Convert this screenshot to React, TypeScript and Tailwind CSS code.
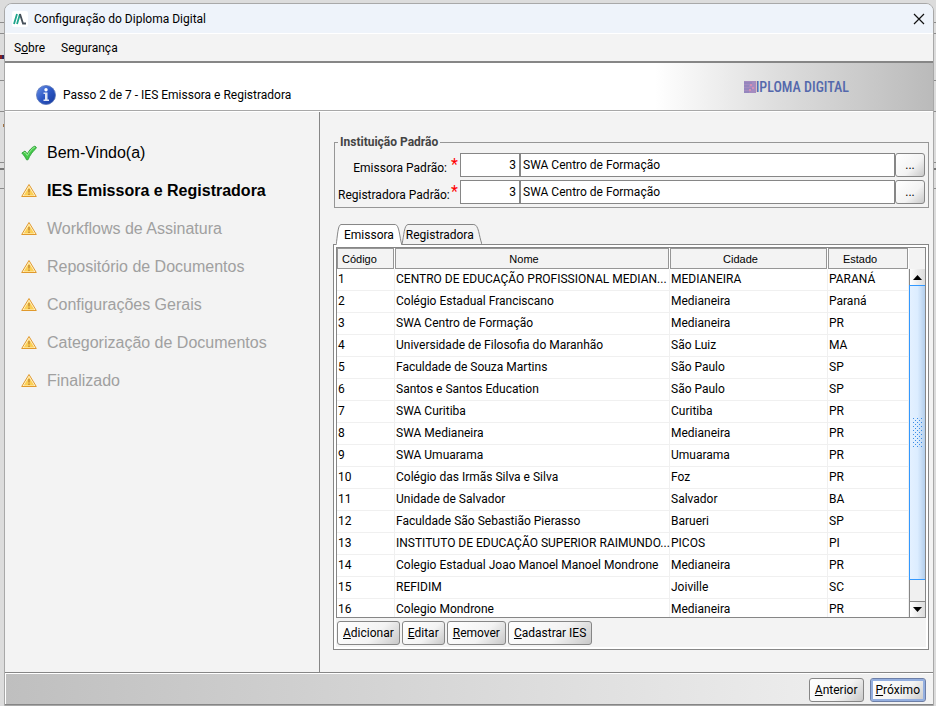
import { useState } from 'react'

const UI = "font-['Roboto',sans-serif]"
const ARIAL = "font-['Liberation_Sans',Arial,sans-serif]"

const steps = [
  { label: 'Bem-Vindo(a)', state: 'done' },
  { label: 'IES Emissora e Registradora', state: 'current' },
  { label: 'Workflows de Assinatura', state: 'pending' },
  { label: 'Repositório de Documentos', state: 'pending' },
  { label: 'Configurações Gerais', state: 'pending' },
  { label: 'Categorização de Documentos', state: 'pending' },
  { label: 'Finalizado', state: 'pending' },
]

const rows = [
  ['1', 'CENTRO DE EDUCAÇÃO PROFISSIONAL MEDIAN...', 'MEDIANEIRA', 'PARANÁ'],
  ['2', 'Colégio Estadual Franciscano', 'Medianeira', 'Paraná'],
  ['3', 'SWA Centro de Formação', 'Medianeira', 'PR'],
  ['4', 'Universidade de Filosofia do Maranhão', 'São Luiz', 'MA'],
  ['5', 'Faculdade de Souza Martins', 'São Paulo', 'SP'],
  ['6', 'Santos e Santos Education', 'São Paulo', 'SP'],
  ['7', 'SWA Curitiba', 'Curitiba', 'PR'],
  ['8', 'SWA Medianeira', 'Medianeira', 'PR'],
  ['9', 'SWA Umuarama', 'Umuarama', 'PR'],
  ['10', 'Colégio das Irmãs Silva e Silva', 'Foz', 'PR'],
  ['11', 'Unidade de Salvador', 'Salvador', 'BA'],
  ['12', 'Faculdade São Sebastião Pierasso', 'Barueri', 'SP'],
  ['13', 'INSTITUTO DE EDUCAÇÃO SUPERIOR RAIMUNDO...', 'PICOS', 'PI'],
  ['14', 'Colegio Estadual Joao Manoel Manoel Mondrone', 'Medianeira', 'PR'],
  ['15', 'REFIDIM', 'Joiville', 'SC'],
  ['16', 'Colegio Mondrone', 'Medianeira', 'PR'],
]

export default function App() {
  const [tab, setTab] = useState('Emissora')

  return (
    <div className={`relative h-screen flex flex-col bg-[#dcdcdc] pl-1 pr-[2px] pt-[3px] text-xs text-black ${UI}`}>
      <Backdrop />
      <div className="relative flex-1 min-h-0 flex flex-col rounded-t-lg border border-[#a8a8a8] bg-[#f3f3f3] overflow-hidden">
        <header className="h-[29px] shrink-0 flex items-center gap-[6px] bg-[#eef3fa] pl-[7px] pr-2">
          <AppIcon />
          <h1 className="flex-1">Configuração do Diploma Digital</h1>
          <button type="button" aria-label="Fechar">
            <svg width="12" height="12" viewBox="0 0 12 12" stroke="#111" strokeWidth="1.2">
              <path d="M1 1l10 10M11 1L1 11" />
            </svg>
          </button>
        </header>

        <nav className="h-[30px] shrink-0 flex items-center gap-4 border-t border-white border-b-2 border-b-[#868686] px-[9px]">
          <button type="button">S<u>o</u>bre</button>
          <button type="button">Segurança</button>
        </nav>

        <div className="h-12 shrink-0 flex items-center justify-between border-b border-[#a8a8a8] bg-[linear-gradient(to_right,#fff_0%,#fff_70%,#dedede_83%,#bababa_100%)] pl-[31px] pr-[84px]">
          <div className="flex items-center gap-[7px] pt-4">
            <InfoIcon />
            <p>Passo 2 de 7 - IES Emissora e Registradora</p>
          </div>
          <Logo />
        </div>

        <div className="flex-1 min-h-0 flex border-t border-white">
          <aside className={`w-[315px] shrink-0 border-r border-[#868686] pl-4 pt-[22px] text-base ${ARIAL}`}>
            <ol>
              {steps.map(s => (
                <li key={s.label} className="flex items-center gap-[10px] h-[38px]">
                  {s.state === 'done' ? <CheckIcon /> : <WarnIcon />}
                  <span
                    className={
                      s.state === 'done' ? '' : s.state === 'current' ? 'font-bold' : 'text-[#a0a0a0]'
                    }
                  >
                    {s.label}
                  </span>
                </li>
              ))}
            </ol>
          </aside>

          <main className="flex-1 min-w-0 flex flex-col pl-[13px] pr-1 pt-[22px] pb-[22px]">
            <fieldset className="border border-[#969696] ml-px px-[3px] pt-[3px] pb-[3px]">
              <legend className="px-[2px] h-4 leading-4 font-bold text-[#444]">Instituição Padrão</legend>
              <div className="flex flex-col gap-[3px]">
                <Lookup id="emissora" label="Emissora Padrão:" />
                <Lookup id="registradora" label="Registradora Padrão:" />
              </div>
            </fieldset>

            <div role="tablist" className="flex items-end pl-[3px] mt-4">
              {['Emissora', 'Registradora'].map(t => (
                <Tab key={t} label={t} active={t === tab} onClick={() => setTab(t)} />
              ))}
            </div>

            <div className="flex-1 min-h-0 flex flex-col border border-[#868686] bg-[#f3f3f3] p-[2px] shadow-[inset_0_0_0_2px_#fff]">
              <div className="flex-1 min-h-0 flex border border-[#868686] bg-white overflow-hidden">
                <div className="flex-1 min-w-0 overflow-hidden">
                  <table className="w-full table-fixed border-separate border-spacing-0">
                    <colgroup>
                      <col className="w-[58px]" />
                      <col />
                      <col className="w-[158px]" />
                      <col className="w-[81px]" />
                    </colgroup>
                    <thead>
                      <tr className={`h-[21px] text-[11px] ${ARIAL}`}>
                        {['Código', 'Nome', 'Cidade', 'Estado'].map(h => (
                          <th key={h} className="p-0 pr-[1px] font-normal">
                            <div
                              className={`h-[21px] leading-[21px] border border-[#969696] bg-[#f3f3f3] ${
                                h === 'Código' ? 'text-left pl-1' : 'pr-4'
                              }`}
                            >
                              {h}
                            </div>
                          </th>
                        ))}
                      </tr>
                    </thead>
                    <tbody>
                      {rows.map(r => (
                        <tr key={r[0]} className="h-[22px]">
                          {r.map((c, i) => (
                            <td
                              key={i}
                              className="p-0 pl-[1px] whitespace-nowrap border-b border-r border-[#f0f0f0] leading-[21px]"
                            >
                              {c}
                            </td>
                          ))}
                        </tr>
                      ))}
                    </tbody>
                  </table>
                </div>
                <Scrollbar />
              </div>
              <div className="flex gap-[2px] px-[1px] pt-[3px] pb-[2px]">
                <Btn k="A" rest="dicionar" />
                <Btn k="E" rest="ditar" />
                <Btn k="R" rest="emover" />
                <Btn k="C" rest="adastrar IES" />
              </div>
            </div>
          </main>
        </div>

        <footer className="h-[33px] shrink-0 flex items-center justify-end gap-[6px] border-t border-b border-[#868686] bg-[linear-gradient(to_right,#bfbfbf,#f3f3f3)] shadow-[inset_1px_1px_0_#fff] pt-[2px] pr-[7px]">
          <Btn k="A" rest="nterior" />
          <Btn k="P" rest="róximo" focused />
        </footer>
      </div>
    </div>
  )
}

// the window underneath, only its edges are visible
function Backdrop() {
  return (
    <svg className="absolute inset-0 w-full h-full" aria-hidden="true">
      {[22, 33, 80, 111, 162, 188].map(y => (
        <rect key={y} y={y} width="100%" height="1" fill="#8c8c8c" />
      ))}
      <rect y="168" width="100%" height="2" fill="#777" />
      <rect y="55" width="2" height="4" fill="#8a2020" />
      <rect x="2" y="55" width="2" height="4" fill="#2a2a60" />
      <rect x="3" y="124" width="1" height="3" fill="#a07040" />
    </svg>
  )
}

function Lookup({ id, label }: { id: string; label: string }) {
  return (
    <div className="flex h-6">
      <label htmlFor={id} className="w-[109px] pt-[7px] leading-4 text-right whitespace-nowrap">{label}</label>
      <span className="w-[13px] pl-1 text-base leading-6 text-[#f00]">*</span>
      <input id={id} defaultValue="3" className="w-[60px] border border-[#868686] bg-white px-[3px] text-right outline-none" />
      <input
        aria-label={`${label} nome`}
        defaultValue="SWA Centro de Formação"
        className="flex-1 min-w-0 border border-[#868686] bg-white px-[2px] outline-none"
      />
      <button
        type="button"
        className="w-[30px] rounded-[3px] border border-[#868686] bg-[linear-gradient(135deg,#fff_0%,#f3f3f3_60%,#c8c8c8_100%)]"
      >
        ...
      </button>
    </div>
  )
}

function Tab({ label, active, onClick }: { label: string; active: boolean; onClick: () => void }) {
  return (
    <button
      type="button"
      role="tab"
      aria-selected={active}
      onClick={onClick}
      className={active ? 'relative z-10 h-[21px] px-2 -mb-px' : 'relative h-5 pt-[2px] pl-1 pr-2'}
    >
      <svg className="absolute inset-0 w-full h-full" viewBox="0 0 80 20" preserveAspectRatio="none">
        <path
          d="M0 20C2 12 2 1 6 0.5H72C77 1 77 12 80 20"
          fill={active ? '#fff' : '#f3f3f3'}
          stroke="#868686"
          vectorEffect="non-scaling-stroke"
        />
      </svg>
      <span className="relative">{label}</span>
    </button>
  )
}

function Btn({ k, rest, focused }: { k: string; rest: string; focused?: boolean }) {
  return (
    <button
      type="button"
      className={`h-6 px-[5px] rounded-[3px] border bg-[linear-gradient(135deg,#fff_0%,#f3f3f3_60%,#c8c8c8_100%)] ${
        focused ? 'border-[#6d7fa8] shadow-[inset_0_0_0_2px_#94afe0]' : 'border-[#868686]'
      }`}
    >
      <u>{k}</u>
      {rest}
    </button>
  )
}

function Scrollbar() {
  return (
    <div className="w-4 shrink-0 flex flex-col">
      <div className="h-[21px] bg-[#f3f3f3]" />
      <button type="button" aria-label="Subir" className="h-4 flex items-center justify-center border-l border-[#868686] bg-linear-to-r from-white to-[#dcdcdc]">
        <svg width="9" height="5" viewBox="0 0 9 5"><path d="M0 5L4.500 0L9 5z" /></svg>
      </button>
      <div className="flex-1 flex items-center justify-center border border-r-0 border-[#3399ff] bg-linear-to-r from-[#e4f1ff] via-[#dcedff] to-[#b4cfec]">
        <svg width="10" height="30" viewBox="0 0 10 30">
          <defs>
            <pattern id="grip" width="4" height="4" patternUnits="userSpaceOnUse">
              <path d="M0 0h1v1h-1zM2 2h1v1h-1z" fill="#3c8ee6" />
            </pattern>
          </defs>
          <rect width="10" height="30" fill="url(#grip)" />
        </svg>
      </div>
      <div className="h-[21px] border-l border-[#868686] bg-[#f0f0f0]" />
      <button type="button" aria-label="Descer" className="h-4 flex items-center justify-center border-l border-t border-[#868686] bg-linear-to-r from-white to-[#dcdcdc]">
        <svg width="9" height="5" viewBox="0 0 9 5"><path d="M0 0L4.500 5L9 0z" /></svg>
      </button>
    </div>
  )
}

function AppIcon() {
  return (
    <svg width="16" height="16" viewBox="0 0 16 16">
      <rect width="16" height="16" rx="2" fill="#fff" />
      <path d="M2 13L5 3M5 13L8 3" stroke="#1fa58c" strokeWidth="1.800" />
      <path d="M8 3L11 12.500H14" fill="none" stroke="#46505a" strokeWidth="1.800" />
    </svg>
  )
}

function InfoIcon() {
  return (
    <svg width="20" height="20" viewBox="0 0 20 20">
      <defs>
        <linearGradient id="info" x1="0" y1="0" x2="1" y2="1">
          <stop offset="0" stopColor="#6a92e8" />
          <stop offset="0.500" stopColor="#2c57c4" />
          <stop offset="1" stopColor="#15389a" />
        </linearGradient>
      </defs>
      <circle cx="10" cy="10" r="9.500" fill="url(#info)" stroke="#5a76b8" strokeWidth="0.800" />
      <circle cx="10" cy="4.800" r="1.700" fill="#fff" />
      <path d="M7.500 7.500h4v7h1.500v1.500h-5.500v-1.500h1.500v-5.500h-1.500z" fill="#dfe6f6" />
    </svg>
  )
}

function CheckIcon() {
  return (
    <svg width="16" height="16" viewBox="0 0 16 16">
      <path d="M0.800 8L4 6L6.300 8.800C8 5.500 11 2 14 1L15.500 3C12 6 9 10 7 14.800H5.500C4.500 12.500 3 10.500 0.800 8z" fill="#45c94a" stroke="#249a30" strokeWidth="0.800" />
      <path d="M2.800 8L4 7.200L6.400 10.400C8.500 6.500 11 3.500 14 2" fill="none" stroke="#a5eea0" strokeWidth="0.900" />
    </svg>
  )
}

function WarnIcon() {
  return (
    <svg width="16" height="16" viewBox="0 0 16 16">
      <path d="M8 1.500L15.300 13.500H0.700z" fill="#fff3cf" stroke="#e0992c" strokeLinejoin="round" />
      <path d="M8 4L13.300 12.500H2.700z" fill="#fbcf55" />
      <path d="M7.200 6h1.600v3.500h-1.600zM7.200 10.500h1.600v1.400h-1.600z" fill="#c98f35" />
    </svg>
  )
}

function Logo() {
  return (
    <div className="flex items-center">
      <svg width="12" height="12" viewBox="0 0 12 12">
        <rect width="12" height="12" fill="#a58cc0" />
        <path d="M0 2h8M0 5h5M0 8h8M0 11h5" stroke="#8580bc" />
        <path d="M6 3h2v2h-2zM8 6h2v2h-2zM5 8h2v2h-2z" fill="#d58fb5" />
      </svg>
      <span className="font-['Roboto_Condensed',Roboto,sans-serif] text-sm leading-4 font-medium text-[#5468ac]">
        IPLOMA DIGITAL
      </span>
    </div>
  )
}
